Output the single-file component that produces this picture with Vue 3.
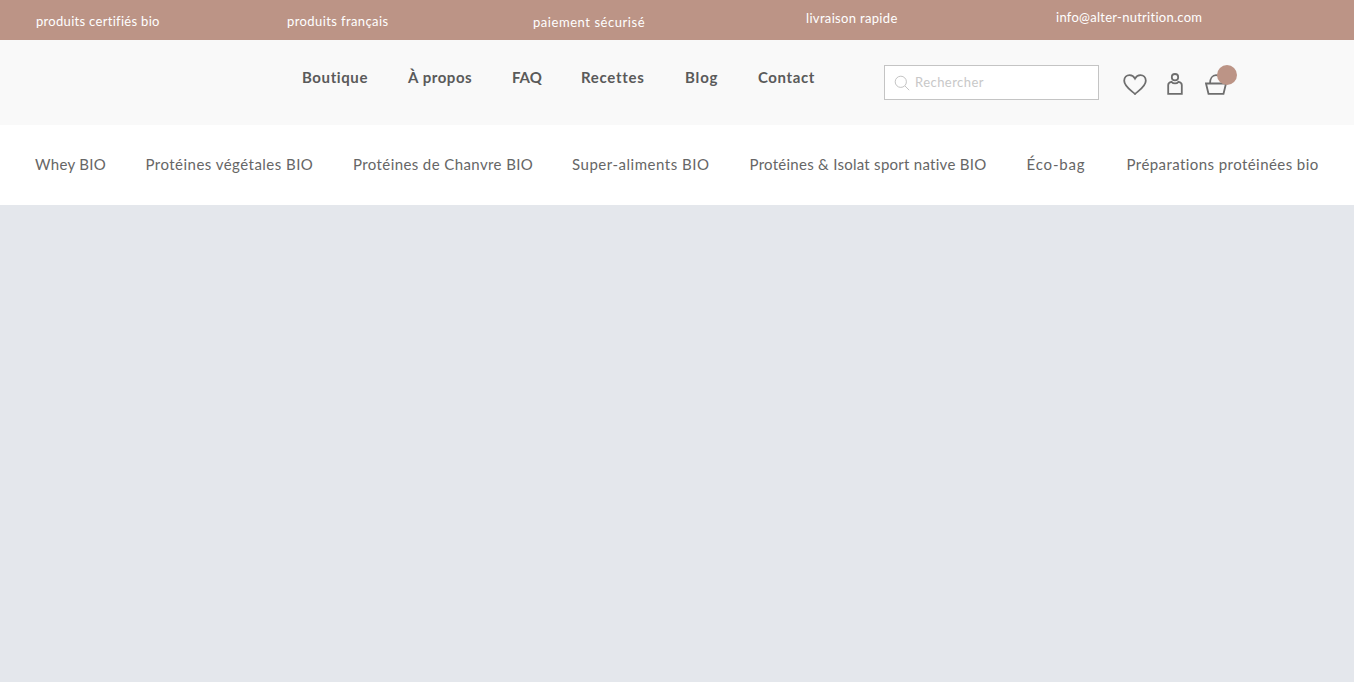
<template>
  <div class="page">
    <div class="topbar">
      <span class="promo promo-1">produits certifiés bio</span>
      <span class="promo promo-2">produits français</span>
      <span class="promo promo-3">paiement sécurisé</span>
      <span class="promo promo-4">livraison rapide</span>
      <span class="promo promo-5">info@alter-nutrition.com</span>
    </div>

    <header class="header">
      <nav class="main-nav">
        <a v-for="item in mainLinks" :key="item.label" :style="linkStyle(item)">{{ item.label }}</a>
      </nav>
      <div class="search">
        <svg class="search-icon" width="16" height="16" viewBox="0 0 16 16" fill="none">
          <circle cx="6.8" cy="6.800" r="5.600" />
          <path d="M11 11l4.200 4.200" />
        </svg>
        <input type="text" placeholder="Rechercher" />
      </div>
      <div class="icons">
        <svg class="heart" width="24" height="21" viewBox="0 0 24 21" fill="none">
          <path d="M12 20C8 16.400 1.200 12.500 1.200 6.800 1.200 3.400 3.600 1.200 6.600 1.200c2.300 0 4.200 1.200 5.400 3.400 1.200-2.200 3.100-3.400 5.400-3.400 3 0 5.400 2.200 5.400 5.600C22.800 12.500 16 16.400 12 20z" />
        </svg>
        <svg class="user" width="16" height="22" viewBox="0 0 16 22" fill="none">
          <circle cx="8" cy="4.200" r="3.200" />
          <path d="M4.500 8.800C2.500 9.200 1.200 10 1.200 12v8.800h13.600V12c0-2-1.300-2.800-3.300-3.200-1 1.200-2.200 1.600-3.500 1.600S5.500 10 4.500 8.800z" />
        </svg>
        <div class="basket">
          <svg width="22" height="21" viewBox="0 0 22 21" fill="none">
            <path d="M1 9.500h20L18.500 19.800H3.500z" />
            <path d="M5 9.500C5 4.500 7.500 1.200 11 1.200c2 0 3.500.8 4.500 2" />
          </svg>
          <span class="badge"></span>
        </div>
      </div>
    </header>

    <nav class="cat-nav">
      <a v-for="item in categories" :key="item.label" :style="linkStyle(item)">{{ item.label }}</a>
    </nav>

    <main class="content"></main>
  </div>
</template>

<script setup>
const mainLinks = [
  { label: 'Boutique', width: 106, spacing: 0.6 },
  { label: 'À propos', width: 104, spacing: 0.55 },
  { label: 'FAQ', width: 69, spacing: 0 },
  { label: 'Recettes', width: 104, spacing: 0.7 },
  { label: 'Blog', width: 73, spacing: 0.85 },
  { label: 'Contact', width: 60, spacing: 0.6 },
]
const categories = [
  { label: 'Whey BIO', width: 110.5, spacing: 0.3 },
  { label: 'Protéines végétales BIO', width: 207.5, spacing: 0.47 },
  { label: 'Protéines de Chanvre BIO', width: 219, spacing: 0.4 },
  { label: 'Super-aliments BIO', width: 177.5, spacing: 0.52 },
  { label: 'Protéines & Isolat sport native BIO', width: 277, spacing: 0.27 },
  { label: 'Éco-bag', width: 100, spacing: 0.85 },
  { label: 'Préparations protéinées bio', width: 193, spacing: 0.43 },
]

const linkStyle = (item) => ({
  width: item.width + 'px',
  letterSpacing: item.spacing + 'px',
})
</script>

<style>
html,
body {
  margin: 0;
  background: #fff;
  overflow: hidden;
}
</style>

<style scoped>
.page {
  width: 1354px;
  height: 682px;
  display: flex;
  flex-direction: column;
  font-family: Lato, "Open Sans", sans-serif;
}

.topbar {
  height: 40px;
  flex: none;
  display: flex;
  background: #bc9486;
  color: #fff;
  font-size: 13px;
  line-height: 16px;
  letter-spacing: 0.33px;
}

.promo {
  white-space: nowrap;
}
.promo-1 { margin: 13px 0 0 36px; width: 251px; letter-spacing: 0.3px; }
.promo-2 { margin-top: 13px; width: 246px; letter-spacing: 0.4px; }
.promo-3 { margin-top: 14px; width: 273px; letter-spacing: 0.55px; }
.promo-4 { margin-top: 10px; width: 250px; }
.promo-5 { margin-top: 9px; letter-spacing: 0.27px; }

.header {
  height: 85px;
  flex: none;
  display: flex;
  background: #f9f9f9;
}

.main-nav {
  display: flex;
  margin: 28px 0 0 302px;
  width: 582px;
  font-size: 15px;
  font-weight: 700;
  line-height: 18px;
  color: #5a5a5a;
  white-space: nowrap;
}

.search {
  width: 215px;
  height: 35px;
  margin-top: 25px;
  box-sizing: border-box;
  border: 1px solid #c4c4c4;
  background: #fff;
  display: flex;
  align-items: center;
  padding-left: 9px;
}

.search-icon {
  flex: none;
}
.search-icon circle,
.search-icon path {
  stroke: #c4c4c4;
  stroke-width: 1;
}

.search input {
  border: 0;
  outline: 0;
  padding: 0 0 1px;
  margin-left: 5px;
  width: 170px;
  background: transparent;
  font: 13px Lato, sans-serif;
  letter-spacing: 0.45px;
}
.search input::placeholder {
  color: #c8c8c8;
  opacity: 1;
}

.icons {
  display: flex;
  align-items: flex-start;
  margin-left: 24px;
  padding-top: 34px;
}
.icons svg path,
.icons svg circle {
  stroke: #6e6e6e;
  stroke-width: 1.8;
}
.heart {
  margin-top: 0;
}
.user {
  margin-left: 20px;
  margin-top: -1px;
}
.basket {
  position: relative;
  margin-left: 22px;
  margin-top: 0;
}
.badge {
  position: absolute;
  top: -9px;
  left: 12px;
  width: 20px;
  height: 20px;
  border-radius: 50%;
  background: #bc9486;
}

.cat-nav {
  height: 78px;
  padding: 0 0 2px 35px;
  flex: none;
  display: flex;
  align-items: center;
  background: #fff;
  font-size: 15px;
  color: #666;
  white-space: nowrap;
}

.content {
  flex: 1;
  background: #e4e7ec;
}
</style>
